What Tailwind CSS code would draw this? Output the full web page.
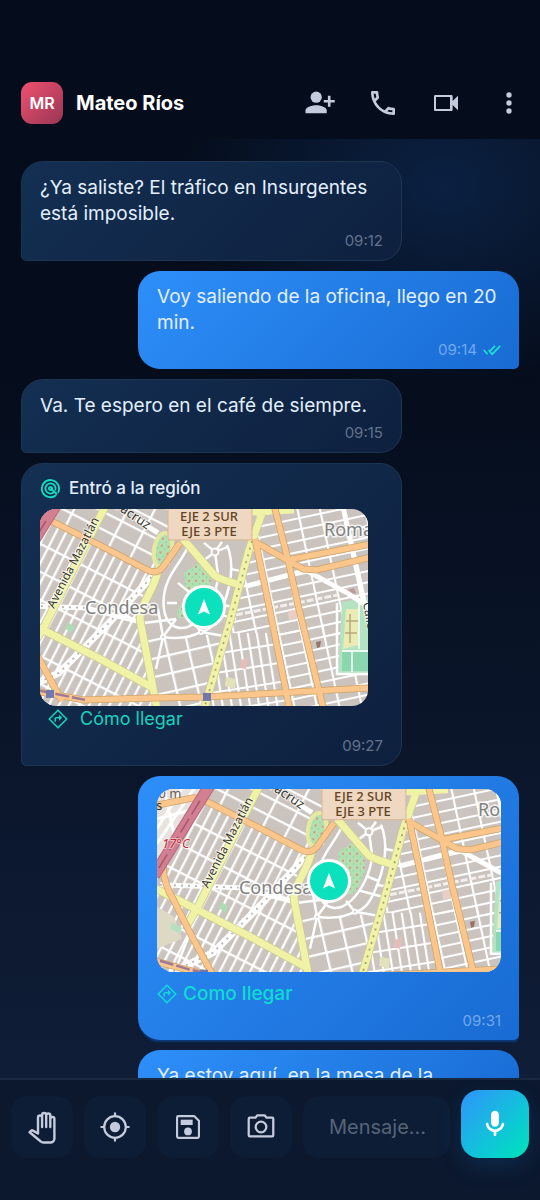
<!DOCTYPE html>
<html lang="es">
<head>
<meta charset="utf-8">
<meta name="viewport" content="width=device-width, initial-scale=1">
<title>Mateo Ríos</title>
<script src="https://cdn.jsdelivr.net/npm/@tailwindcss/browser@4"></script>
</head>
<body class="flex h-screen flex-col overflow-hidden bg-[#050d1c] font-['Inter',sans-serif] text-[#e3efff]">

<!-- Shared street map and icons -->
<svg class="absolute size-0" aria-hidden="true">
  <defs>
    <pattern id="grid-west" width="9" height="25" patternUnits="userSpaceOnUse" patternTransform="translate(11 11) rotate(27)">
      <path d="M0 0V25M0 0H9" stroke="#fff" stroke-width="4.6"/>
    </pattern>
    <pattern id="grid-north" width="24" height="16" patternUnits="userSpaceOnUse" patternTransform="translate(60 0) rotate(27)">
      <path d="M0 0V16M0 0H24" stroke="#fff" stroke-width="4.6"/>
    </pattern>
    <pattern id="grid-south" width="21" height="18" patternUnits="userSpaceOnUse" patternTransform="translate(123 128) rotate(-13)">
      <path d="M0 0V18M0 0H21" stroke="#fff" stroke-width="4.6"/>
    </pattern>
    <pattern id="grid-east" width="22" height="11" patternUnits="userSpaceOnUse" patternTransform="translate(205 76) rotate(-12)">
      <path d="M0 0V11M0 0H22" stroke="#fff" stroke-width="4.2"/>
    </pattern>
    <pattern id="grid-dense" width="9" height="19" patternUnits="userSpaceOnUse" patternTransform="translate(200 140) rotate(-9)">
      <path d="M0 0V19M0 0H9" stroke="#fff" stroke-width="4.2"/>
    </pattern>
    <pattern id="trees" width="7" height="7" patternUnits="userSpaceOnUse">
      <rect width="7" height="7" fill="#b2e0b0"/>
      <circle cx="2" cy="2" r="1.100" fill="#d98a80"/><circle cx="5.5" cy="5" r="0.8" fill="#8fcba0"/>
    </pattern>
    <path id="avenues" d="M-40 17 0 9 13 13 63 38 107 61Q117 66 123 58L140 34M234-4 248 51 258 96 284 202M215 30 228 92 250 202M215 33 247 51 263 60 277 61 332 48M248 51 332 35M-31 78Q-30 96-20 112L-4 144 12 174 22 192M-40 172 0 183 43 191 113 189 165 188 332 179"/>
    <symbol id="map" overflow="visible">
      <rect x="-40" y="-4" width="372" height="206" fill="#cbc3be"/>
      <path d="M13 13 110 63 100 114 113 179 -37 101V16Z" fill="url(#grid-west)"/>
      <path d="M-40 99 113 179 116 200H-40Z" fill="url(#grid-west)"/>
      <path d="M13 0H130V60H112L13 13Z" fill="url(#grid-north)"/>
      <path d="M-37-2H13L-37 81Z" fill="#e8e3df"/>
      <path d="M-37 55 0 0M-37 40-12 0M-30 0-20 45M-37 30-5 22" stroke="#fff" stroke-width="3"/>
      <path d="M100 114 123 128 161 123 186 118 165 200H116Z" fill="url(#grid-south)"/>
      <path d="M218 0H332V128L190 124Z" fill="url(#grid-east)"/>
      <path d="M190 124 236 124 250 200H166Z" fill="url(#grid-dense)"/>
      <path d="M236 124 332 110V200H252Z" fill="url(#grid-east)"/>
      <!-- parks and campus -->
      <path d="M-37 118-20 128-12 150-37 160Z" fill="#ddd9c4"/>
      <path d="M-22 134 -12 139-14 145-24 140Z" fill="#b4dfc0"/>
      <path d="M28 113 34 118 31 124 26 120Z" fill="#aadfb4"/>
      <path d="M302 93 328 88 330 164H298Z" fill="#b3e3c0"/>
      <path d="M306 100H318V136L303 140Z" fill="#e9ecb4"/>
      <path d="M310 105V134M306 112H318M305 124H317" stroke="#b9a77c" stroke-width="1.5"/>
      <path d="M302 143H328V162H302Z" fill="#8ad6ae"/>
      <path d="M319 90V140M302 142H328M312 142V163" stroke="#fff" stroke-width="1.5"/>
      <path d="M297 94V165H330" fill="none" stroke="#fff" stroke-width="2.5"/>
      <path d="M304 82 314 79 316 84 306 87Z" fill="#b99c96"/>
      <path d="M186 168 196 170 195 180 185 177Z" fill="#e4e2bd"/>
      <path d="M201 151 208 149 206 160 200 159Z" fill="#e7bdb9"/>
      <path d="M248 102 258 100 257 110 249 111Z" fill="#e8cfc6"/>
      <path d="M276 133 281 132 280 138 277 139Z" fill="#96746c"/>
      <!-- Condesa ring -->
      <path d="M128 62 144 34 176 68 198 76 184 124 124 130 104 112Z" fill="#cbc3be"/>
      <path d="M144 64 158 54 170 66 171 82 162 103 148 108 138 110 137 102 146 88Z" fill="url(#trees)"/>
      <g fill="none" stroke="#fff" stroke-width="2.5">
        <path d="M187 36C196 58 189 84 180 104C175 115 170 121 161 123C148 130 135 130 123 128"/>
        <path d="M150 33C145 48 134 58 128 72C122 86 122 102 128 112C132 118 140 121 148 118C160 113 174 94 178 70"/>
        <path d="M175 43 160 54M175 43 188 38M175 43 178 66M175 43 164 34M175 43 182 33M123 128 118 100M104 114 136 110M123 128 116 160M166 102 196 110M161 123 190 128M161 123 152 112M138 74 150 84M127 94H137M123 128 136 110M182 96 194 98M174 88 184 92M190 60 200 62"/>
      </g>
      <g fill="#cbc3be" stroke="#fff" stroke-width="2">
        <circle cx="175" cy="43" r="3.5"/><circle cx="123" cy="128" r="2"/><circle cx="161" cy="123" r="2"/>
      </g>
      <!-- white avenues -->
      <g fill="none" stroke="#fff" stroke-linejoin="round">
        <path d="M303-2 311 34 328 110M207 77 257 64 267 62 307 84 330 99" stroke-width="5"/>
        <path d="M121 58 69 114 19 164-24 184" stroke-width="7"/>
        <path d="M-34 96 46 99 104 114M96 10 118 24" stroke-width="5"/>
        <path d="M-4 144-22 190" stroke-width="2.5"/>
      </g>
      <path d="M121 58 69 114 19 164-24 184M-34 96 46 99" fill="none" stroke="#b9b3b5" stroke-width="1.8" stroke-dasharray="2 5"/>
      <path d="M196 106 298 86" fill="none" stroke="#f2efed" stroke-width="3" stroke-dasharray="7 2"/>
      <!-- yellow avenues -->
      <g fill="none" stroke-linejoin="round">
        <path d="M66-4 4 118-8 138M-40 99 3 121 60 150 113 179M118 62C112 88 96 98 101 116L117 200M143 30 174 66Q178 70 200 76M225-4 209 41 190 112 164 200" stroke="#cdcb94" stroke-width="8.5"/>
        <path d="M66-4 4 118-8 138M-40 99 3 121 60 150 113 179M118 62C112 88 96 98 101 116L117 200M143 30 174 66Q178 70 200 76M225-4 209 41 190 112 164 200M212 3 254 1" stroke="#f0f2a6" stroke-width="7"/>
      </g>
      <ellipse cx="123" cy="41" rx="9" ry="17" transform="rotate(10 123 41)" fill="url(#trees)" stroke="#e6eaa0" stroke-width="4"/>
      <path d="M212 32 190 112 164 200" fill="none" stroke="#a8a46e" stroke-width="1.8" stroke-dasharray="2 5"/>
      <!-- orange avenues -->
      <g fill="none" stroke-linejoin="round">
        <use href="#avenues" stroke="#cfa468" stroke-width="7"/>
        <use href="#avenues" stroke="#fac68b" stroke-width="5.5"/>
        <path d="M16-4-40 87" stroke="#b5687c" stroke-width="12"/>
        <path d="M16-4-40 87" stroke="#d37e91" stroke-width="10"/>
        <path d="M6 12-38 84" stroke="#a0586f" stroke-width="1.5" stroke-dasharray="16 5"/>
        <path d="M-34 172-4 181 45 191" stroke="#a07898" stroke-width="2.5" stroke-dasharray="14 3"/>
      </g>
      <g fill="#7079ae"><rect x="6" y="181" width="8" height="8"/><rect x="163" y="184" width="8" height="8"/></g>
      <!-- labels -->
      <rect x="128" y="-6" width="84" height="37" rx="2" fill="#eed8c2" stroke="#d9b793"/>
      <g font-family="Noto Sans, sans-serif">
        <g font-size="13" font-weight="500" fill="#63441f" text-anchor="middle"><text x="169" y="12">EJE 2 SUR</text><text x="169" y="27">EJE 3 PTE</text></g>
        <g font-size="18" fill="#808080" stroke="#fff" stroke-opacity="0.8" stroke-width="3" paint-order="stroke"><text x="45" y="105">Condesa</text><text x="284" y="27">Roma Norte</text></g>
        <g font-size="12" fill="#38382c" stroke="#fff" stroke-opacity="0.6" stroke-width="2" paint-order="stroke">
          <text x="14" y="100" transform="rotate(-63 14 100)">Avenida Mazatlán</text>
          <text x="63" y="-9" font-size="13" transform="rotate(34 63 -9)">Veracruz</text>
          <text x="323" y="94" transform="rotate(80 323 94)">Calle</text>
        </g>
        <g font-size="13"><text x="-43" y="9" fill="#6c5f5a">20 m</text><text x="-38" y="21" fill="#333">s</text><text x="-32" y="59" fill="#c4303e" stroke="#fff" stroke-opacity="0.5" stroke-width="2" paint-order="stroke" font-style="italic">17°C</text></g>
      </g>
    </symbol>
    <symbol id="directions" viewBox="0 0 20 20">
      <g fill="none" stroke="currentColor" stroke-linejoin="round">
        <path d="M10 1.2 18.8 10 10 18.8 1.2 10Z" stroke-width="1.6"/>
        <path d="M7.2 12.8V9.6Q7.2 8.8 8 8.8H12" stroke-width="1.5"/>
      </g>
      <path d="M11 5.8 14.2 8.8 11 11.8Z" fill="currentColor"/>
    </symbol>
  </defs>
</svg>

<header class="flex shrink-0 items-center pt-[71px] pb-[5px] pl-[21px]">
  <div class="flex size-[42px] shrink-0 items-center justify-center rounded-[11px] bg-linear-to-br from-[#f2506f] to-[#983654] text-base font-semibold text-white">MR</div>
  <h1 class="ml-[13px] flex-1 truncate text-xl font-bold text-white">Mateo Ríos</h1>
  <nav class="flex text-[#c3cbdc]" aria-label="Acciones">
    <button class="flex size-[63px] items-center justify-center" aria-label="Agregar persona">
      <svg class="size-8" viewBox="0 0 32 32" fill="currentColor"><circle cx="12.2" cy="10.2" r="5.6"/><path d="M1.5 26.300V23.300C1.500 19.900 8.600 18.200 12.200 18.200S22.700 19.900 22.700 23.300V26.300Z"/><path d="M25.200 8.800V19.800M19.700 14.300H30.700" stroke="currentColor" stroke-width="2.600"/></svg>
    </button>
    <button class="flex size-[63px] items-center justify-center" aria-label="Llamar">
      <svg class="size-8" viewBox="0 0 24 24" fill="currentColor"><path d="M6.540 5c.06.89.21 1.760.45 2.590l-1.200 1.200c-.41-1.200-.67-2.470-.76-3.790h1.510m9.860 12.020c.85.24 1.720.39 2.600.45v1.490c-1.320-.09-2.590-.35-3.800-.75l1.200-1.190M7.500 3H4c-.55 0-1 .45-1 1 0 9.390 7.610 17 17 17 .55 0 1-.45 1-1v-3.490c0-.55-.45-1-1-1-1.240 0-2.450-.2-3.570-.57a.84.84 0 0 0-.31-.05c-.26 0-.51.1-.71.29l-2.200 2.200a15.150 15.150 0 0 1-6.590-6.590l2.200-2.200c.28-.28.36-.67.25-1.020A11.360 11.360 0 0 1 8.500 4c0-.55-.45-1-1-1z"/></svg>
    </button>
    <button class="flex size-[63px] items-center justify-center" aria-label="Videollamada">
      <svg class="size-8" viewBox="0 0 24 24" fill="currentColor"><path d="M15 7.500v9H4.500V7.500H15m1-1.500H4c-.55 0-1 .45-1 1v10c0 .55.45 1 1 1h12c.55 0 1-.45 1-1v-3.500l4 4v-11l-4 4V7c0-.55-.45-1-1-1z"/></svg>
    </button>
    <button class="flex size-[63px] items-center justify-center" aria-label="Más opciones">
      <svg class="size-8" viewBox="0 0 24 24" fill="currentColor"><circle cx="12" cy="6" r="2"/><circle cx="12" cy="12" r="2"/><circle cx="12" cy="18" r="2"/></svg>
    </button>
  </nav>
</header>

<main class="flex min-h-0 flex-1 flex-col gap-2.5 overflow-hidden bg-[radial-gradient(ellipse_260px_200px_at_82%_5%,#0b2142_0%,transparent_100%),linear-gradient(to_bottom,#050d1c_0%,#050d1c_25%,#0f1d37_100%)] px-[21px] pt-[22px] text-[19px] leading-[26px]">

  <article class="w-[76.5%] shrink-0 self-start rounded-[22px] rounded-bl-[5px] border border-[#1e3552] bg-linear-135 from-[#132f52] to-[#0e203e] pt-[13px] pr-[18px] pb-2.5 pl-[18px]">
    <p>¿Ya saliste? El tráfico en Insurgentes está imposible.</p>
    <time class="mt-[5px] block text-right text-[15px] leading-[18px] text-[#62728d]">09:12</time>
  </article>

  <article class="w-[76.5%] shrink-0 self-end rounded-[22px] rounded-br-[5px] bg-linear-135 from-[#2e8ffa] to-[#186bd2] pt-[13px] pr-[18px] pb-2.5 pl-[19px]">
    <p>Voy saliendo de la oficina, llego en 20 min.</p>
    <div class="mt-[5px] flex items-center justify-end gap-1.5 text-[15px] leading-[18px] text-[#71a8ee]">
      <time>09:14</time>
      <svg class="h-3 w-[18px]" viewBox="0 0 18 12" fill="none" stroke="#1fe0d0" stroke-width="1.7" role="img" aria-label="Leído"><path d="M.8 6 4.600 10.200M5.600 6 9.200 10.200 17.200 1.800M7.400 6.600 12 1.800"/></svg>
    </div>
  </article>

  <article class="w-[76.5%] shrink-0 self-start rounded-[22px] rounded-bl-[5px] border border-[#1e3552] bg-linear-135 from-[#132f52] to-[#0e203e] pt-[13px] pr-[18px] pb-2.5 pl-[18px]">
    <p>Va. Te espero en el café de siempre.</p>
    <time class="mt-[5px] block text-right text-[15px] leading-[18px] text-[#62728d]">09:15</time>
  </article>

  <article class="w-[76.5%] shrink-0 self-start rounded-[22px] rounded-bl-[5px] border border-[#1e3552] bg-linear-135 from-[#132f52] to-[#0e203e] pt-[13px] pr-[18px] pb-2.5 pl-[18px]">
    <h2 class="flex items-center gap-2 text-[17px] leading-[22px] font-medium">
      <svg class="size-[21px] text-[#14dcc0]" viewBox="0 0 21 21" fill="none" stroke="currentColor" stroke-width="1.8"><path d="M16.200 17A8.600 8.600 0 1 1 18 14.700"/><path d="M14 14.200A5.100 5.100 0 1 1 15.200 12.500"/><path d="M10.500 10.500 17.200 16.200"/><circle cx="10.5" cy="10.5" r="1.6"/></svg>
      Entró a la región
    </h2>
    <div class="relative mt-2.5 aspect-[5/3] w-[328px] max-w-full overflow-hidden rounded-2xl">
      <svg class="block size-full" viewBox="0 0 328 197" preserveAspectRatio="xMidYMid slice" role="img" aria-label="Mapa de Condesa"><use href="#map"/></svg>
      <span class="absolute top-1/2 left-1/2 flex size-11 -translate-1/2 items-center justify-center rounded-full border-3 border-white bg-[#0be2bd]"><svg class="h-4 w-3" viewBox="0 0 12 16" fill="#fff"><path d="M6 0 12 15.500 6 12.600 0 15.500Z"/></svg></span>
    </div>
    <a href="#ruta" class="ml-2 flex w-fit items-center gap-3 text-lg leading-[26px] text-[#17d3bd]"><svg class="size-5"><use href="#directions"/></svg>Cómo llegar</a>
    <time class="mt-[5px] block text-right text-[15px] leading-[18px] text-[#62728d]">09:27</time>
  </article>

  <article class="w-[76.5%] shrink-0 self-end rounded-[22px] rounded-br-[5px] bg-linear-135 from-[#2e8ffa] to-[#186bd2] pt-[13px] pr-[18px] pb-2.5 pl-[19px] shadow-[0_3px_2px_-1px_#0a3c7c]">
    <div class="relative aspect-[15/8] w-full overflow-hidden rounded-2xl">
      <svg class="block size-full" viewBox="-37 0 344 184" preserveAspectRatio="xMidYMid slice" role="img" aria-label="Mapa de Condesa"><use href="#map"/></svg>
      <span class="absolute top-1/2 left-1/2 flex size-11 -translate-1/2 items-center justify-center rounded-full border-3 border-white bg-[#0be2bd]"><svg class="h-4 w-3" viewBox="0 0 12 16" fill="#fff"><path d="M6 0 12 15.500 6 12.600 0 15.500Z"/></svg></span>
    </div>
    <a href="#ruta" class="mt-[9px] flex w-fit items-center gap-1.5 text-[19px] leading-[26px] font-medium text-[#0fdbd3]"><svg class="size-5"><use href="#directions"/></svg>Como llegar</a>
    <time class="mt-[5px] block text-right text-[15px] leading-[18px] text-[#71a8ee]">09:31</time>
  </article>

  <article class="w-[76.5%] shrink-0 self-end rounded-[22px] rounded-br-[5px] bg-linear-135 from-[#2e8ffa] to-[#186bd2] pt-[13px] pr-[18px] pb-2.5 pl-[19px]">
    <p>Ya estoy aquí, en la mesa de la ventana.</p>
  </article>
</main>

<footer class="flex shrink-0 items-end gap-[11px] border-t-2 border-[#18283f] bg-[#0b182e] pt-2.5 pr-[11px] pb-[42px] pl-[11px] text-[#c3cbdc]">
  <button class="flex size-[62px] shrink-0 items-center justify-center rounded-2xl bg-[#0d1d36]" aria-label="Saludar">
    <svg class="h-[33px] w-7" viewBox="0 0 28 33" fill="none" stroke="currentColor" stroke-width="2.4" stroke-linejoin="round" stroke-linecap="round"><path d="M10 22.500V6.500a2.050 2.050 0 0 1 4.100 0V16M14.100 16V4a2.050 2.050 0 0 1 4.100 0V16M18.200 16V4.500a2.050 2.050 0 0 1 4.100 0V16M22.300 16V8a2.050 2.050 0 0 1 4.100 0V27.500a4 4 0 0 1-4 4H15.500a4 4 0 0 1-3-1.300L1.600 21.200 3.100 19.800a1.500 1.500 0 0 1 1.800-.2L10 22.500"/></svg>
  </button>
  <button class="flex size-[62px] shrink-0 items-center justify-center rounded-2xl bg-[#0d1d36]" aria-label="Ubicación">
    <svg class="size-[30px]" viewBox="0 0 30 30" fill="none" stroke="currentColor" stroke-width="2.2"><circle cx="15" cy="15" r="10.8"/><circle cx="15" cy="15" r="5.2" fill="currentColor" stroke="none"/><path d="M15 .5V4.500M15 25.500V29.500M.5 15H4.500M25.500 15H29.500"/></svg>
  </button>
  <button class="flex size-[62px] shrink-0 items-center justify-center rounded-2xl bg-[#0d1d36]" aria-label="Guardar">
    <svg class="size-8" viewBox="0 0 24 24" fill="none" stroke="currentColor" stroke-width="1.6" stroke-linejoin="round"><path d="M4.800 3.800H16.600L20.200 7.400V19.200Q20.200 20.200 19.200 20.200H4.800Q3.800 20.200 3.800 19.200V4.800Q3.800 3.800 4.800 3.800Z"/><path d="M6.500 6.500H15.500V10.500H6.500Z" fill="currentColor" stroke="none"/><circle cx="12" cy="15.3" r="2.9" fill="currentColor" stroke="none"/></svg>
  </button>
  <button class="flex size-[62px] shrink-0 items-center justify-center rounded-2xl bg-[#0d1d36]" aria-label="Cámara">
    <svg class="size-8" viewBox="0 0 24 24" fill="none" stroke="currentColor" stroke-width="1.7" stroke-linejoin="round"><path d="M3.600 5H7.800L9.300 3.200H14.700L16.200 5H20.400Q21.200 5 21.200 5.800V18.200Q21.200 19 20.400 19H3.600Q2.800 19 2.800 18.200V5.800Q2.800 5 3.600 5Z"/><circle cx="12" cy="12" r="4"/></svg>
  </button>
  <input type="text" aria-label="Mensaje" placeholder="Mensaje..." class="h-[62px] w-0 min-w-0 flex-1 rounded-2xl bg-[#0d1d36] pr-4 pl-[26px] text-xl text-white outline-none placeholder:text-[#566479]">
  <button class="flex size-[68px] shrink-0 items-center justify-center rounded-[18px] bg-linear-to-br from-[#2f92fb] to-[#03e4b8] shadow-[0_8px_24px_#1f7fd02e]" aria-label="Grabar audio">
    <svg class="size-8" viewBox="0 0 24 24" fill="#fff"><path d="M12 14c1.660 0 3-1.340 3-3V5c0-1.660-1.340-3-3-3S9 3.340 9 5v6c0 1.660 1.340 3 3 3zm5.910-3c-.49 0-.9.36-.98.85C16.520 14.200 14.470 16 12 16s-4.520-1.800-4.930-4.150c-.08-.49-.49-.85-.98-.85-.61 0-1.090.54-1 1.140.49 3 2.890 5.350 5.910 5.780V20c0 .55.45 1 1 1s1-.45 1-1v-2.080c3.020-.43 5.420-2.780 5.910-5.780.1-.6-.39-1.140-1-1.140z"/></svg>
  </button>
</footer>
</body>
</html>
